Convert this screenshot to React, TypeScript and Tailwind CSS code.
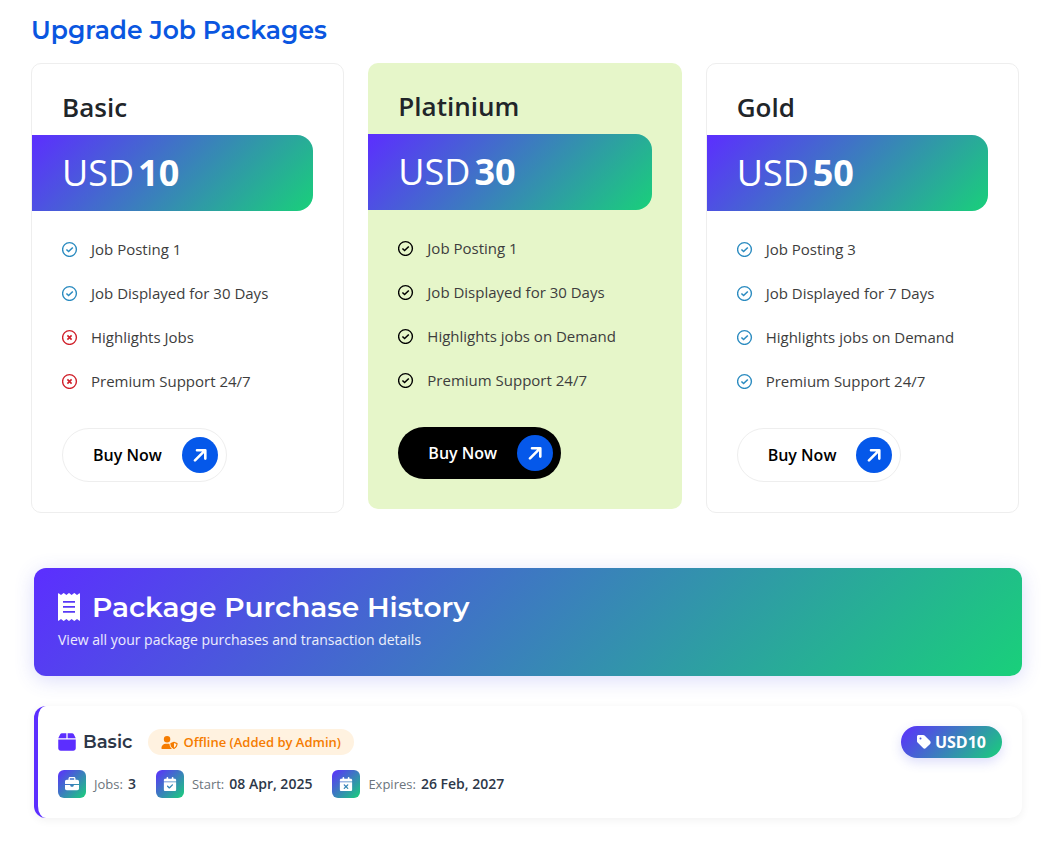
import React from 'react';
import { FaBox, FaBriefcase, FaCalendarCheck, FaCalendarXmark, FaTag, FaUserShield } from 'react-icons/fa6';

interface Feature {
  label: string;
  included: boolean;
}

interface JobPackage {
  name: string;
  price: number;
  featured?: boolean;
  features: Feature[];
}

const packages: JobPackage[] = [
  {
    name: 'Basic',
    price: 10,
    features: [
      { label: 'Job Posting 1', included: true },
      { label: 'Job Displayed for 30 Days', included: true },
      { label: 'Highlights Jobs', included: false },
      { label: 'Premium Support 24/7', included: false },
    ],
  },
  {
    name: 'Platinium',
    price: 30,
    featured: true,
    features: [
      { label: 'Job Posting 1', included: true },
      { label: 'Job Displayed for 30 Days', included: true },
      { label: 'Highlights jobs on Demand', included: true },
      { label: 'Premium Support 24/7', included: true },
    ],
  },
  {
    name: 'Gold',
    price: 50,
    features: [
      { label: 'Job Posting 3', included: true },
      { label: 'Job Displayed for 7 Days', included: true },
      { label: 'Highlights jobs on Demand', included: true },
      { label: 'Premium Support 24/7', included: true },
    ],
  },
];

const details = [
  { icon: FaBriefcase, label: 'Jobs:', value: '3' },
  { icon: FaCalendarCheck, label: 'Start:', value: '08 Apr, 2025' },
  { icon: FaCalendarXmark, label: 'Expires:', value: '26 Feb, 2027' },
];

const FeatureIcon: React.FC<{ included: boolean; featured?: boolean }> = ({ included, featured }) => {
  const color = featured ? 'text-black' : included ? 'text-[#2b8bc0]' : 'text-[#d0202a]';
  return (
    <svg className={`w-4 h-4 shrink-0 ${color}`} viewBox="0 0 16 16" fill="none" stroke="currentColor" aria-hidden="true">
      <circle cx="7.5" cy="8.5" r="6.9" strokeWidth="1.4" />
      {included ? (
        <path d="M4.4 8.5l2.2 2 4.2-4" strokeWidth="1.6" />
      ) : (
        <path d="M5.4 6.4l4.2 4.2M9.6 6.4l-4.2 4.2" strokeWidth="1.6" />
      )}
    </svg>
  );
};

const ReceiptIcon: React.FC = () => (
  <svg className="w-[22px] h-7" viewBox="0 0 22 28" fill="currentColor" aria-hidden="true">
    <path
      fillRule="evenodd"
      d="M0 .8Q0-.2 1 .4L3 2 5.3.2Q5.7 0 6.1.2L8.4 2 10.6.2Q11 0 11.4.2L13.6 2 15.9.2Q16.3 0 16.7.2L19 2 21 .4Q22-.2 22 .8V27.2Q22 28.2 21 27.6L19 26 16.7 27.8Q16.3 28 15.9 27.8L13.6 26 11.4 27.8Q11 28 10.6 27.8L8.4 26 6.1 27.8Q5.7 28 5.3 27.8L3 26 1 27.6Q0 28.2 0 27.2ZM5 8.1V9.8H17V8.1ZM5 13.1V14.8H17V13.1ZM5 18.1V19.8H17V18.1Z"
    />
  </svg>
);

const PackageCard: React.FC<{ item: JobPackage }> = ({ item }) => (
  <article className={`rounded-[10px] pt-7 pb-[30px] ${item.featured ? 'bg-[#e6f6c9]' : 'bg-white border border-[#eeeeee]'}`}>
    <h3 className="px-[30px] mb-3 text-[26px] leading-[31px] font-semibold text-[#212529]">{item.name}</h3>
    <div className="mr-[30px] h-[76px] px-[30px] flex items-center gap-1 rounded-r-2xl bg-linear-135/srgb from-[#5c2eff] to-[#19d07a] text-white text-4xl">
      <span className="font-normal">USD</span>
      <span className="font-bold">{item.price}</span>
    </div>
    <ul className="mt-[26px] px-[30px] space-y-5">
      {item.features.map(f => (
        <li key={f.label} className="flex items-center gap-[13px] text-[15px] leading-6 text-[#3d3d3d]">
          <FeatureIcon included={f.included} featured={item.featured} />
          {f.label}
        </li>
      ))}
    </ul>
    <div className="mt-[35px] px-[30px]">
      <button
        type="button"
        className={`flex items-center gap-5 py-2 pl-[30px] pr-2 rounded-full text-base font-semibold cursor-pointer ${
          item.featured ? 'bg-black text-white' : 'bg-white text-black border border-[#eeeeee]'
        }`}
      >
        Buy Now
        <span className="w-9 h-9 rounded-full bg-[#0558ea] flex items-center justify-center">
          <svg className="w-[14px] h-[14px] text-white" viewBox="0 0 14 14" fill="none" stroke="currentColor" strokeWidth="2.6" strokeLinecap="round" strokeLinejoin="round" aria-hidden="true">
            <path d="M2 12.4L12 2.4M4 2.2h8.3v8.4" />
          </svg>
        </span>
      </button>
    </div>
  </article>
);

export default function App() {
  return (
    <main className="min-h-screen bg-white pt-3 pb-8 font-['Open_Sans',sans-serif]">
      <section className="pl-[31px] pr-[26px]">
        <h2 className="mb-[15px] text-[25px] leading-9 font-semibold text-[#0a56e0] font-['Montserrat','Inter',sans-serif]">
          Upgrade Job Packages
        </h2>
        <div className="grid grid-cols-3 items-start gap-6">
          {packages.map(p => (
            <PackageCard key={p.name} item={p} />
          ))}
        </div>
      </section>

      <section className="mt-[55px] pl-[34px] pr-[23px]">
        <header className="h-[108px] px-6 pt-[22px] rounded-xl bg-linear-135/srgb from-[#5c2eff] to-[#19d07a] text-white shadow-[0_4px_20px_rgba(74,80,230,0.2)]">
          <h2 className="flex items-center gap-3 text-[28px] leading-[34px] font-semibold font-['Montserrat','Inter',sans-serif]">
            <ReceiptIcon />
            Package Purchase History
          </h2>
          <p className="mt-[5px] text-sm leading-[22px] text-white/90">View all your package purchases and transaction details</p>
        </header>

        <article className="mt-[30px] h-[112px] pl-5 pr-5 pt-5 flex items-start justify-between rounded-xl bg-white border-l-4 border-[#5c2eff] shadow-[0_2px_10px_rgba(0,0,0,0.06)]">
          <div>
            <div className="mt-[3px] flex items-center">
              <FaBox className="w-[18px] h-5 text-[#5c2eff]" />
              <h3 className="ml-[7px] text-lg leading-[26px] font-semibold text-[#2d3748] font-['Montserrat','Inter',sans-serif]">Basic</h3>
              <span className="ml-[15px] flex items-center gap-1.5 px-[13px] rounded-full bg-[#fff2e0] text-[13px] leading-[26px] font-semibold text-[#f57c00]">
                <FaUserShield className="w-[17px] h-[13px]" />
                Offline (Added by Admin)
              </span>
            </div>
            <dl className="mt-[15px] flex gap-5">
              {details.map(({ icon: Icon, label, value }) => (
                <div key={label} className="flex items-center gap-2">
                  <span className="w-7 h-7 rounded-md bg-linear-135/srgb from-[#5c2eff] to-[#19d07a] flex items-center justify-center text-white">
                    <Icon className="w-[14px] h-[14px]" />
                  </span>
                  <div className="flex items-baseline gap-[5px] text-[13px] leading-5">
                    <dt className="text-[#6c757d]">{label}</dt>
                    <dd className="text-sm leading-5 font-semibold text-[#2d3748]">{value}</dd>
                  </div>
                </div>
              ))}
            </dl>
          </div>
          <span className="flex items-center gap-1 h-8 px-4 rounded-full bg-linear-135/srgb from-[#5c2eff] to-[#19d07a] text-base font-bold text-white shadow-[0_4px_12px_rgba(74,80,230,0.2)]">
            <FaTag className="w-[14px] h-4" />
            USD10
          </span>
        </article>
      </section>
    </main>
  );
}
